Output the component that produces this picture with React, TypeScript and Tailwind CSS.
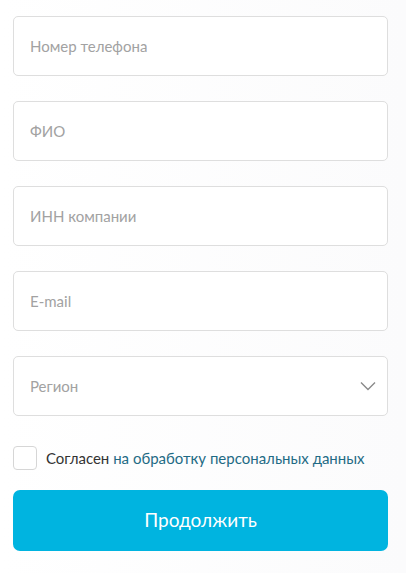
import { useState } from "react";

const fields = ["Номер телефона", "ФИО", "ИНН компании", "E-mail"];

export default function App() {
  const [agreed, setAgreed] = useState(false);

  return (
    <div className="min-h-[573px] w-[406px] bg-gradient-to-r from-white to-[#fbfbfc] pl-[13px] pr-[18px] pt-[16px] font-['Lato','Noto_Sans',sans-serif]">
      <form className="flex flex-col gap-[25px]" onSubmit={(e) => e.preventDefault()}>
        {fields.map((f) => (
          <input
            key={f}
            placeholder={f}
            className="h-[60px] w-full rounded-[5px] border border-[#dedede] bg-white px-4 text-[15px] text-[#333] outline-none placeholder:text-[#a2a2a2]"
          />
        ))}

        {/* select */}
        <div className="relative">
          <select
            defaultValue=""
            className="h-[60px] w-full appearance-none rounded-[5px] border border-[#dedede] bg-white px-4 text-[15px] text-[#a2a2a2] outline-none"
          >
            <option value="" disabled>
              Регион
            </option>
          </select>
          <svg
            className="pointer-events-none absolute right-[12px] top-[25px]"
            width="16"
            height="10"
            viewBox="0 0 16 10"
            fill="none"
          >
            <path d="M1 1.5l7 7 7-7" stroke="#8a8a8a" strokeWidth="1.4" />
          </svg>
        </div>
      </form>

      <label className="mt-[30px] flex h-[24px] items-center gap-[9px] text-[15px]">
        <input
          type="checkbox"
          checked={agreed}
          onChange={(e) => setAgreed(e.target.checked)}
          className="h-[24px] w-[24px] appearance-none rounded-[4px] border border-[#d6d6d6] bg-white"
        />
        <span className="text-[#333]">
          Согласен <a className="text-[#1f6b85]">на обработку персональных данных</a>
        </span>
      </label>

      <button className="mt-[20px] h-[61px] w-full rounded-[7px] bg-[#00b4e0] text-[19px] text-white">
        Продолжить
      </button>
    </div>
  );
}
